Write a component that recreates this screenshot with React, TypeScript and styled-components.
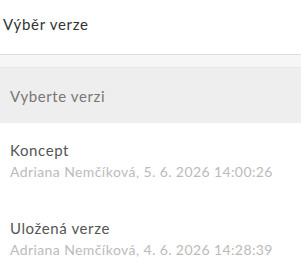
import React from 'react'
import styled, { createGlobalStyle } from 'styled-components'

const GlobalStyle = createGlobalStyle`
  html, body {
    margin: 0;
    padding: 0;
    background: #fff;
  }
  body {
    font-family: Lato, "Open Sans", sans-serif;
  }
`

const Panel = styled.div`
  width: 301px;
  height: 275px;
  overflow: hidden;
  background: #fff;
`

const Header = styled.div`
  height: 55px;
  display: flex;
  align-items: center;
  padding: 0 3px 6px;
  border-bottom: 1px solid #dedede;
  box-sizing: border-box;
  font-size: 15px;
  letter-spacing: 0.7px;
  color: #333;
`

const SelectWrap = styled.div`
  padding-top: 12px;
  background: #f6f6f6;
`

const SelectBox = styled.div`
  height: 55px;
  display: flex;
  align-items: center;
  padding: 0 10px;
  background: #eeeeee;
  border-top: 1px solid #e6e6e6;
  font-size: 15px;
  letter-spacing: 0.6px;
  color: #777;
`

const List = styled.div`
  display: flex;
  flex-direction: column;
`

const Item = styled.div`
  height: 78px;
  padding: 18px 10px 0;
  box-sizing: border-box;
  display: flex;
  flex-direction: column;
  gap: 4px;
`

const Title = styled.div`
  font-size: 15px;
  letter-spacing: 0.6px;
  color: #555;
`

const Meta = styled.div`
  font-size: 14px;
  letter-spacing: 0.4px;
  color: #bbb;
  white-space: nowrap;
`

const versions = [
  { title: 'Koncept', meta: 'Adriana Nemčíková, 5. 6. 2026 14:00:26' },
  { title: 'Uložená verze', meta: 'Adriana Nemčíková, 4. 6. 2026 14:28:39' },
]

export default function App() {
  return (
    <Panel>
      <GlobalStyle />
      <Header>Výběr verze</Header>
      <SelectWrap>
        <SelectBox>Vyberte verzi</SelectBox>
      </SelectWrap>
      <List>
        {versions.map((v) => (
          <Item key={v.title}>
            <Title>{v.title}</Title>
            <Meta>{v.meta}</Meta>
          </Item>
        ))}
      </List>
    </Panel>
  )
}
